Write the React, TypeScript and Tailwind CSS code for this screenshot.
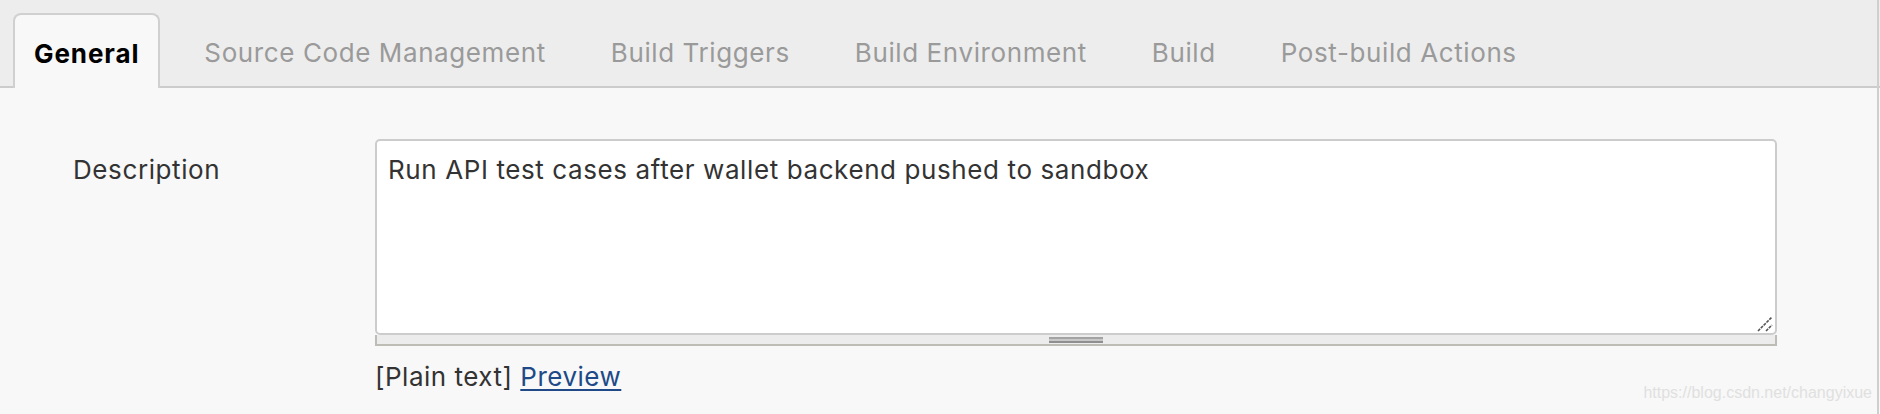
import { useState } from 'react';

const TABS = [
  'General',
  'Source Code Management',
  'Build Triggers',
  'Build Environment',
  'Build',
  'Post-build Actions',
];

export default function App() {
  const [active, setActive] = useState('General');
  const [text, setText] = useState(
    'Run API test cases after wallet backend pushed to sandbox'
  );

  return (
    <div className="relative flex h-[414px] w-[1880px] flex-col overflow-hidden bg-[#f8f8f8] font-['Inter','Noto_Sans',sans-serif]">
      <div className="pointer-events-none absolute right-[1px] top-0 h-full w-[2px] bg-[#cfcfcf]" />

      <nav className="flex h-[88px] shrink-0 items-end gap-[23px] border-b-2 border-[#cccccc] bg-[#ededed] pl-[13px]">
        {TABS.map((tab) => {
          const isActive = tab === active;
          return (
            <button
              key={tab}
              type="button"
              onClick={() => setActive(tab)}
              className={
                isActive
                  ? 'mb-[-2px] flex h-[75px] items-center rounded-t-[8px] border-2 border-b-0 border-[#d0d0d0] bg-[#f8f8f8] px-[19px] pt-[4px] text-[26px] font-bold tracking-[0.9px] text-black'
                  : 'mb-[-2px] flex h-[75px] items-center px-[21px] pt-[4px] text-[26px] tracking-[0.6px] text-[#9a9a9a]'
              }
            >
              {tab}
            </button>
          );
        })}
      </nav>

      <div className="grid grid-cols-[302px_1402px] pl-[73px] pt-[51px]">
        <label
          htmlFor="description"
          className="pt-[15px] text-[26px] leading-[32px] tracking-[0.6px] text-[#333333]"
        >
          Description
        </label>

        <div className="flex flex-col">
          <div className="relative">
            <textarea
              id="description"
              value={text}
              onChange={(e) => setText(e.target.value)}
              className="block h-[196px] w-full resize-none rounded-[5px] border-2 border-[#cccccc] bg-white px-[11px] pt-[13px] text-[26px] leading-[32px] tracking-[0.6px] text-[#333333] outline-none"
            />
            <svg
              className="pointer-events-none absolute bottom-[3px] right-[4px]"
              width="16"
              height="16"
              viewBox="0 0 16 16"
            >
              <path
                d="M1 15 L15 1 M9 15 L15 9"
                stroke="#555"
                strokeWidth="1.6"
                strokeDasharray="3 1"
              />
            </svg>
          </div>

          <div className="flex h-[11px] items-center justify-center border-x-2 border-b-2 border-[#bdbdb5] bg-[#ececec]">
            <div className="flex h-[6px] w-[54px] flex-col">
              <div className="h-[2px] bg-[#a3a3a3]" />
              <div className="h-[2px] bg-[#c8c8c8]" />
              <div className="h-[2px] bg-[#8f8f8f]" />
            </div>
          </div>

          <div className="mt-[15px] text-[26px] leading-[32px] tracking-[0.5px] text-[#333333]">
            [Plain text]{' '}
            <a href="#" className="text-[#204a87] underline underline-offset-[3px]">
              Preview
            </a>
          </div>
        </div>
      </div>

      <div className="absolute bottom-[9px] right-[8px] font-['Liberation_Sans',sans-serif] text-[16px] text-[#e0e0e0]">
        https://blog.csdn.net/changyixue
      </div>
    </div>
  );
}
